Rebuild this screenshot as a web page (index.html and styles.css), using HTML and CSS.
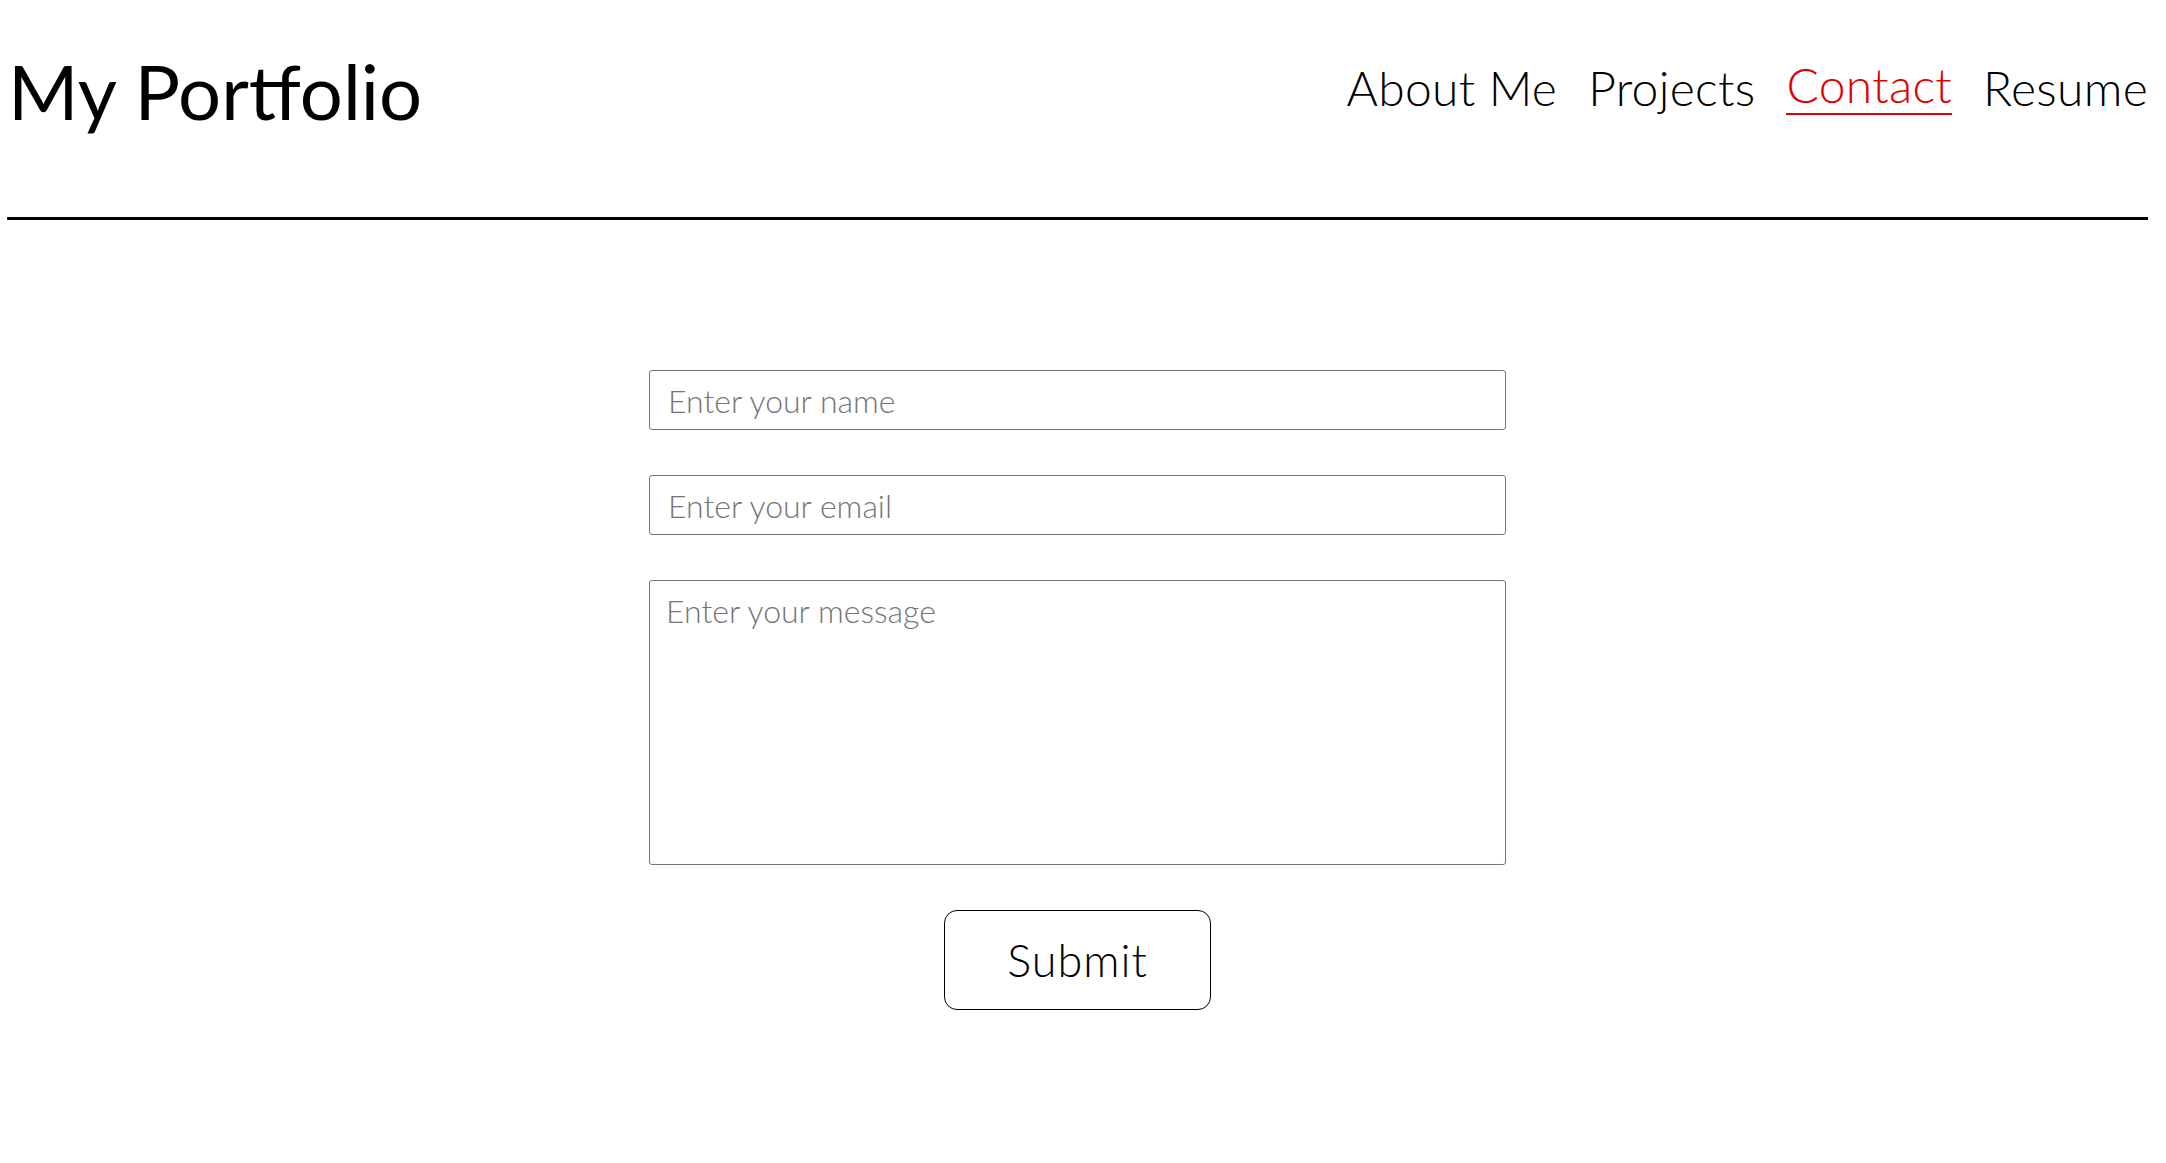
FILE: index.html
```html
<!DOCTYPE html>
<html lang="en">
<head>
<meta charset="utf-8">
<title>My Portfolio</title>
<link rel="stylesheet" href="styles.css">
</head>
<body>
<div class="page">
  <header class="site-header">
    <h1 class="brand">My Portfolio</h1>
    <nav class="nav">
      <a class="nav-link" href="#">About Me</a>
      <a class="nav-link" href="#">Projects</a>
      <a class="nav-link active" href="#">Contact</a>
      <a class="nav-link" href="#">Resume</a>
    </nav>
  </header>
  <hr class="rule">
  <main class="content">
    <form class="contact-form">
      <input class="field" type="text" placeholder="Enter your name">
      <input class="field" type="email" placeholder="Enter your email">
      <textarea class="field area" placeholder="Enter your message"></textarea>
      <button class="submit" type="button">Submit</button>
    </form>
  </main>
</div>
</body>
</html>
```
FILE: styles.css
```css
html, body {
  margin: 0;
  padding: 0;
  background: #ffffff;
}
body {
  font-family: Lato, "Noto Sans", sans-serif;
  color: #000;
}
.page {
  padding: 0 18px 0 7px;
}
.site-header {
  height: 217px;
  display: flex;
  justify-content: space-between;
  align-items: flex-start;
}
.brand {
  margin: 0;
  padding-top: 45px;
  padding-left: 1px;
  font-size: 76px;
  font-weight: 400;
  line-height: 1.2;
}
.nav {
  display: flex;
  gap: 31px;
  padding-top: 59px;
}
.nav-link {
  font-size: 48px;
  font-weight: 300;
  letter-spacing: 0.3px;
  line-height: 1.2;
  color: #000;
  text-decoration: none;
}
.nav-link.active {
  color: #e00000;
  border-bottom: 2px solid #e00000;
  margin-top: -3px;
  height: 57px;
}
.rule {
  margin: 0;
  border: 0;
  height: 3px;
  background: #000;
}
.content {
  display: flex;
  justify-content: center;
  padding-top: 150px;
}
.contact-form {
  width: 857px;
  display: flex;
  flex-direction: column;
  align-items: center;
  gap: 45px;
}
.field {
  box-sizing: border-box;
  width: 100%;
  height: 60px;
  border: 1px solid #767676;
  border-radius: 3px;
  padding: 0 18px;
  font-family: Lato, "Noto Sans", sans-serif;
  font-size: 32px;
  font-weight: 300;
  color: #000;
  background: #fff;
}
.field::placeholder {
  color: #757575;
  opacity: 1;
}
.area {
  height: 285px;
  padding: 10px 16px;
  resize: none;
}
.submit {
  box-sizing: border-box;
  width: 267px;
  height: 100px;
  border: 1.5px solid #000;
  border-radius: 13px;
  background: #fff;
  font-family: Lato, "Noto Sans", sans-serif;
  font-size: 45px;
  font-weight: 300;
  letter-spacing: 1px;
  color: #000;
}
```
